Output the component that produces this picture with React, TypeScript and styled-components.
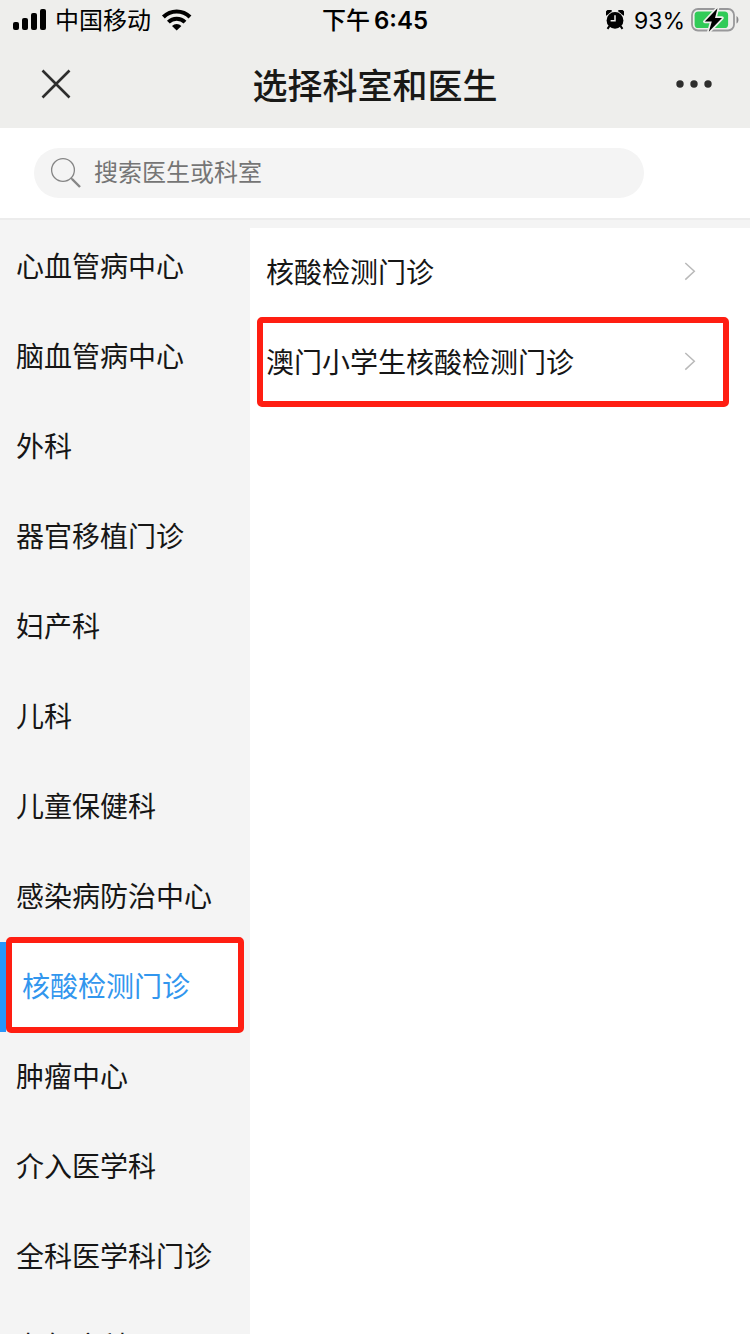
import React from "react";
import styled, { createGlobalStyle, css } from "styled-components";

const GlobalStyle = createGlobalStyle`
  * { box-sizing: border-box; }
  body {
    margin: 0;
    background: #ffffff;
    font-family: Inter, "Noto Sans CJK SC", sans-serif;
  }
  button, input { font: inherit; color: inherit; }
`;

const Screen = styled.div`
  display: flex;
  flex-direction: column;
  height: 100vh;
  overflow: hidden;
  color: #161616;
`;

const Header = styled.header`
  flex: none;
  background: #eeeeec;
`;

const StatusBar = styled.div`
  display: grid;
  grid-template-columns: 1fr auto 1fr;
  align-items: center;
  height: 40px;
  padding: 0 10px 0 13px;
  font-size: 24px;
  line-height: 38px;
  color: #000000;
`;

const StatusGroup = styled.div<{ $end?: boolean }>`
  display: flex;
  align-items: center;
  justify-content: ${(p) => (p.$end ? "flex-end" : "flex-start")};
  gap: ${(p) => (p.$end ? 6 : 9)}px;
`;

const StatusLabel = styled.span`
  padding-top: 2px;
`;

const BatteryLabel = styled(StatusLabel)`
  font-size: 23px;
`;

const Battery = styled.div`
  display: flex;
  align-items: center;
  gap: 6px;
`;

const AlarmSlot = styled.span`
  display: flex;
  margin-right: 4px;
`;

const Time = styled.time`
  display: flex;
  gap: 4px;
  padding: 2px 3px 0 0;
  font-weight: 600;
`;

const Meridiem = styled.span`
  font-weight: 500;
`;

const NavBar = styled.div`
  display: grid;
  grid-template-columns: 80px 1fr 80px;
  align-items: center;
  height: 88px;
  padding: 0 16px;
`;

const Title = styled.h1`
  margin: 0;
  padding-top: 4px;
  font-size: 35px;
  line-height: 48px;
  font-weight: 500;
  text-align: center;
  color: #191917;
`;

const IconButton = styled.button`
  display: flex;
  align-items: center;
  justify-content: center;
  width: 80px;
  height: 64px;
  padding: 0;
  border: 0;
  background: none;
`;

const SearchBar = styled.form`
  flex: none;
  padding: 20px 106px 20px 34px;
  border-bottom: 2px solid #ececec;
`;

const SearchField = styled.label`
  display: flex;
  align-items: center;
  gap: 12px;
  height: 50px;
  padding: 0 16px;
  border-radius: 25px;
  background: #f4f4f4;
`;

const SearchInput = styled.input`
  flex: 1;
  min-width: 0;
  padding: 0;
  border: 0;
  outline: 0;
  background: none;
  font-size: 24px;
  line-height: 36px;
  &::placeholder { color: #757575; opacity: 1; }
`;

const Main = styled.main`
  display: flex;
  flex: 1;
  min-height: 0;
  background: #f4f4f4;
`;

const Sidebar = styled.nav`
  width: 250px;
  flex: none;
  padding-top: 2px;
  overflow-y: auto;
  scrollbar-width: none;
`;

const List = styled.ul`
  margin: 0;
  padding: 0;
  list-style: none;
`;

const marker = css`
  &::before {
    content: "";
    position: absolute;
    z-index: -1;
    border: 6px solid #ff1e12;
    border-radius: 5px;
    background: #ffffff;
  }
`;

const rowStyle = css`
  position: relative;
  isolation: isolate;
  display: flex;
  align-items: center;
  width: 100%;
  height: 90px;
  padding: 0 16px;
  border: 0;
  background: none;
  font-size: 28px;
  line-height: 40px;
  text-align: left;
`;

const DepartmentButton = styled.button<{ $active: boolean }>`
  ${rowStyle}
  ${(p) =>
    p.$active &&
    css`
      border-left: 6px solid #2897fa;
      color: #3296ee;
      ${marker}
      &::before { inset: -5px 6px -1px 0; }
    `}
`;

const Clinics = styled.section`
  flex: 1;
  min-width: 0;
  margin-top: 8px;
  background: #ffffff;
`;

const ClinicLink = styled.a<{ $marked: boolean }>`
  ${rowStyle}
  justify-content: space-between;
  padding-right: 54px;
  color: #161616;
  text-decoration: none;
  ${(p) =>
    p.$marked &&
    css`
      ${marker}
      &::before { inset: -1px 21px 1px 7px; }
    `}
`;

const departments = [
  "心血管病中心",
  "脑血管病中心",
  "外科",
  "器官移植门诊",
  "妇产科",
  "儿科",
  "儿童保健科",
  "感染病防治中心",
  "核酸检测门诊",
  "肿瘤中心",
  "介入医学科",
  "全科医学科门诊",
  "老年病科",
];

const clinics = [
  { name: "核酸检测门诊", marked: false },
  { name: "澳门小学生核酸检测门诊", marked: true },
];

const SignalIcon = () => (
  <svg width="33" height="22" viewBox="0 0 33 22" aria-hidden="true">
    <rect x="0" y="13" width="6" height="8" rx="2" />
    <rect x="9" y="9" width="6" height="12" rx="2" />
    <rect x="18" y="4" width="6" height="17" rx="2" />
    <rect x="27" y="0" width="6" height="21" rx="2" />
  </svg>
);

const WifiIcon = () => (
  <svg width="33" height="22" viewBox="-1 0 33 22" aria-hidden="true">
    <g fill="none" stroke="#000" strokeWidth="4">
      <path d="M2.4 8a18.8 18.8 0 0 1 26.6 0" />
      <path d="M7.4 13.2a11.8 11.8 0 0 1 16.6 0" />
    </g>
    <path d="M15.7 21.4l-4.7-4.5a6.7 6.7 0 0 1 9.4 0z" />
  </svg>
);

const AlarmIcon = () => (
  <svg width="18" height="20" viewBox="0 0 18 20" aria-hidden="true">
    <circle cx="9" cy="10.4" r="8.4" />
    <path d="M.4 5.8A3.6 3.6 0 0 1 6.2.9zM17.6 5.8A3.6 3.6 0 0 0 11.8.9z" />
    <path d="M3.4 16.2l-1.9 2.6M14.6 16.2l1.9 2.6" stroke="#000" strokeWidth="2" />
    <path d="M9 5.2v5.6H4.6" fill="none" stroke="#eeeeec" strokeWidth="1.5" />
  </svg>
);

const BatteryIcon = () => (
  <svg width="49" height="26" viewBox="0 0 49 26" aria-hidden="true">
    <rect x="1" y="2" width="42" height="21.5" rx="6" fill="none" stroke="#98989a" strokeWidth="1.8" />
    <path d="M45.5 9v7.6c2.6-1.4 2.6-6.2 0-7.6z" fill="#88888a" />
    <rect x="3.6" y="4.6" width="33.5" height="16.4" rx="3.6" fill="#31cb58" />
    <path
      d="M26.5 1.2L13.8 14.6h7L17.8 24.8 31 11h-7z"
      stroke="#eeeeec"
      strokeWidth="3.4"
      strokeLinejoin="round"
      paintOrder="stroke"
    />
  </svg>
);

const CloseIcon = () => (
  <svg width="30" height="30" viewBox="0 0 30 30" aria-hidden="true">
    <path d="M1.5 1.5l27 27M28.5 1.5l-27 27" stroke="#2e2e2d" strokeWidth="2.6" />
  </svg>
);

const MoreIcon = () => (
  <svg width="36" height="8" viewBox="0 0 36 8" fill="#2e2e2d" aria-hidden="true">
    <circle cx="4" cy="4" r="3.7" />
    <circle cx="18" cy="4" r="3.7" />
    <circle cx="32" cy="4" r="3.7" />
  </svg>
);

const SearchIcon = () => (
  <svg width="32" height="32" viewBox="0 0 32 32" fill="none" stroke="#858585" aria-hidden="true">
    <circle cx="13" cy="13" r="11.4" strokeWidth="1.3" />
    <path d="M21 21l2 2" strokeWidth="1.4" />
    <path d="M22 22l8 8" strokeWidth="2.4" />
  </svg>
);

const ChevronIcon = () => (
  <svg width="12" height="22" viewBox="0 0 12 22" fill="none" aria-hidden="true">
    <path d="M1.3 1L10.3 9.3L1.3 17.6" stroke="#b9b9b9" strokeWidth="1.5" />
  </svg>
);

export default function App() {
  return (
    <Screen>
      <GlobalStyle />
      <Header>
        <StatusBar>
          <StatusGroup>
            <SignalIcon />
            <StatusLabel>中国移动</StatusLabel>
            <WifiIcon />
          </StatusGroup>
          <Time>
            <Meridiem>下午</Meridiem>
            <span>6:45</span>
          </Time>
          <StatusGroup $end>
            <AlarmSlot>
              <AlarmIcon />
            </AlarmSlot>
            <Battery>
              <BatteryLabel>93%</BatteryLabel>
              <BatteryIcon />
            </Battery>
          </StatusGroup>
        </StatusBar>
        <NavBar>
          <IconButton type="button" aria-label="关闭">
            <CloseIcon />
          </IconButton>
          <Title>选择科室和医生</Title>
          <IconButton type="button" aria-label="更多">
            <MoreIcon />
          </IconButton>
        </NavBar>
      </Header>
      <SearchBar role="search">
        <SearchField>
          <SearchIcon />
          <SearchInput type="text" placeholder="搜索医生或科室" aria-label="搜索医生或科室" />
        </SearchField>
      </SearchBar>
      <Main>
        <Sidebar aria-label="科室">
          <List>
            {departments.map((name) => (
              <li key={name}>
                <DepartmentButton type="button" $active={name === "核酸检测门诊"}>
                  {name}
                </DepartmentButton>
              </li>
            ))}
          </List>
        </Sidebar>
        <Clinics>
          <List>
            {clinics.map((clinic) => (
              <li key={clinic.name}>
                <ClinicLink href="#" $marked={clinic.marked}>
                  {clinic.name}
                  <ChevronIcon />
                </ClinicLink>
              </li>
            ))}
          </List>
        </Clinics>
      </Main>
    </Screen>
  );
}
